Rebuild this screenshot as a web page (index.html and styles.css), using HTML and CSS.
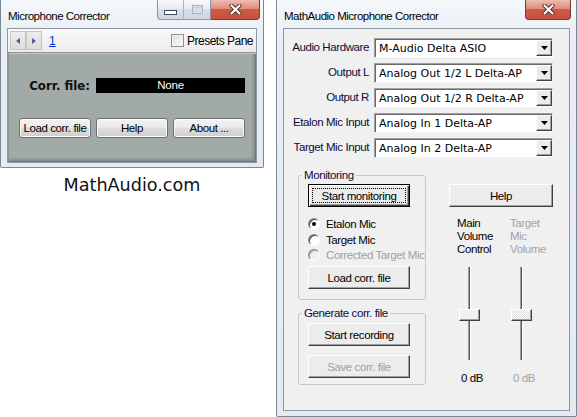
FILE: index.html
```html
<!DOCTYPE html>
<html>
<head>
<meta charset="utf-8">
<title>MathAudio Microphone Corrector</title>
<link rel="stylesheet" href="styles.css">
</head>
<body>
<div class="desk">
  <div class="leftcol">
    <div class="win win-small">
      <div class="titlebar">
        <span class="title">Microphone Corrector</span>
        <div class="tbtns">
          <div class="tb-group">
            <span class="tb tb-min"><svg width="13" height="5" viewBox="0 0 13 5"><rect x="0.5" y="0.5" width="12" height="4" fill="#fff" stroke="#3e4c5c"/></svg></span>
            <span class="tb tb-max"><svg width="11" height="9" viewBox="0 0 11 9"><rect x="0.5" y="0.5" width="10" height="8" fill="none" stroke="#aab3be"/><rect x="1.5" y="1.5" width="8" height="2" fill="#c3cbd4"/></svg></span>
          </div>
          <span class="tb tb-close"><svg width="13" height="11" viewBox="0 0 13 11"><path d="M2.5 1.5 L10.5 9.5 M10.5 1.5 L2.5 9.5" stroke="#5b2b24" stroke-width="4" stroke-linecap="round"/><path d="M2.5 1.5 L10.5 9.5 M10.5 1.5 L2.5 9.5" stroke="#fff" stroke-width="2.2" stroke-linecap="round"/></svg></span>
        </div>
      </div>
      <div class="client client-small">
        <div class="toolbar">
          <div class="nav">
            <span class="navbtn"><svg width="4" height="6" viewBox="0 0 4 6"><path d="M4 0 L0 3 L4 6 Z" fill="#4d5c94"/></svg></span>
            <span class="navbtn"><svg width="4" height="6" viewBox="0 0 4 6"><path d="M0 0 L4 3 L0 6 Z" fill="#4d5c94"/></svg></span>
          </div>
          <a class="pagelink">1</a>
          <span class="presets"><span class="chk"></span>Presets Pane</span>
        </div>
        <div class="panel">
          <div class="corr-row">
            <span class="corr-label">Corr. file:</span>
            <span class="corr-box">None</span>
          </div>
          <div class="btn-row">
            <button class="wbtn">Load corr. file</button>
            <button class="wbtn">Help</button>
            <button class="wbtn">About ...</button>
          </div>
        </div>
      </div>
    </div>
    <div class="site">MathAudio.com</div>
  </div>

  <div class="win win-main">
    <div class="titlebar">
      <span class="title">MathAudio Microphone Corrector</span>
      <div class="tbtns">
        <span class="tb tb-close tb-close-solo"><svg width="13" height="11" viewBox="0 0 13 11"><path d="M2.5 1.5 L10.5 9.5 M10.5 1.5 L2.5 9.5" stroke="#5b2b24" stroke-width="4" stroke-linecap="round"/><path d="M2.5 1.5 L10.5 9.5 M10.5 1.5 L2.5 9.5" stroke="#fff" stroke-width="2.2" stroke-linecap="round"/></svg></span>
      </div>
    </div>
    <div class="client client-main">
      <div class="hw">
        <span class="hw-label">Audio Hardware</span>
        <div class="combo"><span class="combo-text">M-Audio Delta ASIO</span><span class="combo-btn"><svg width="7" height="4" viewBox="0 0 7 4"><path d="M0 0 H7 L3.5 4 Z" fill="#000"/></svg></span></div>
        <span class="hw-label">Output L</span>
        <div class="combo"><span class="combo-text">Analog Out 1/2 L Delta-AP</span><span class="combo-btn"><svg width="7" height="4" viewBox="0 0 7 4"><path d="M0 0 H7 L3.5 4 Z" fill="#000"/></svg></span></div>
        <span class="hw-label">Output R</span>
        <div class="combo"><span class="combo-text">Analog Out 1/2 R Delta-AP</span><span class="combo-btn"><svg width="7" height="4" viewBox="0 0 7 4"><path d="M0 0 H7 L3.5 4 Z" fill="#000"/></svg></span></div>
        <span class="hw-label">Etalon Mic Input</span>
        <div class="combo"><span class="combo-text">Analog In 1 Delta-AP</span><span class="combo-btn"><svg width="7" height="4" viewBox="0 0 7 4"><path d="M0 0 H7 L3.5 4 Z" fill="#000"/></svg></span></div>
        <span class="hw-label">Target Mic Input</span>
        <div class="combo"><span class="combo-text">Analog In 2 Delta-AP</span><span class="combo-btn"><svg width="7" height="4" viewBox="0 0 7 4"><path d="M0 0 H7 L3.5 4 Z" fill="#000"/></svg></span></div>
      </div>

      <div class="lower">
        <div class="lcol">
          <fieldset class="group group-mon">
            <legend>Monitoring</legend>
            <button class="cbtn cbtn-default">Start monitoring</button>
            <div class="radios">
              <div class="radio"><span class="rdot checked"><span class="dot"></span></span>Etalon Mic</div>
              <div class="radio"><span class="rdot"></span>Target Mic</div>
              <div class="radio disabled"><span class="rdot"></span>Corrected Target Mic</div>
            </div>
            <button class="cbtn cbtn-load">Load corr. file</button>
          </fieldset>
          <fieldset class="group group-gen">
            <legend>Generate corr. file</legend>
            <button class="cbtn">Start recording</button>
            <button class="cbtn cbtn-save" disabled>Save corr. file</button>
          </fieldset>
        </div>
        <div class="rcol">
          <button class="cbtn cbtn-help">Help</button>
          <div class="vols">
            <div class="vol">
              <div class="vol-label">Main<br>Volume<br>Control</div>
              <div class="slider"><div class="thumb"></div></div>
              <div class="db">0 dB</div>
            </div>
            <div class="vol vol-off">
              <div class="vol-label">Target<br>Mic<br>Volume</div>
              <div class="slider"><div class="thumb"></div></div>
              <div class="db">0 dB</div>
            </div>
          </div>
        </div>
      </div>
    </div>
  </div>
</div>
</body>
</html>
```

FILE: styles.css
```css
* { box-sizing: border-box; }
html, body { margin: 0; padding: 0; }
body {
  background: #fff;
  width: 577px;
  height: 417px;
  overflow: hidden;
  font-family: "Liberation Sans", Arial, sans-serif;
  font-size: 11.5px;
  letter-spacing: -0.4px;
  color: #000;
}
button {
  font: inherit;
  letter-spacing: inherit;
  color: inherit;
  padding: 0;
  margin: 0;
}

.desk { display: flex; gap: 12px; align-items: flex-start; }
.leftcol { width: 264px; display: flex; flex-direction: column; align-items: center; }

/* window frame */
.win {
  border: 1px solid #7b8896;
  border-top: 0;
  border-radius: 0 0 2px 2px;
  background: linear-gradient(#f5f8fb, #e8eef4 40px, #e4eaf1);
  display: flex;
  flex-direction: column;
  flex: none;
}
.win-small { width: 264px; height: 168px; }
.win-main { width: 301px; height: 417px; }

.titlebar {
  height: 28px;
  flex: none;
  display: flex;
  justify-content: space-between;
  align-items: flex-start;
  padding: 0 3px 0 7px;
}
.win-main .titlebar { padding-right: 5px; }
.title { margin-top: 9px; line-height: 14px; letter-spacing: -0.5px; color: #000; }

.tbtns { display: flex; }
.tb-group {
  display: flex;
  height: 20px;
  border: 1px solid #8895a5;
  border-top: 0;
  border-radius: 0 0 0 4px;
  background: linear-gradient(#f8fafc, #e6ecf2 45%, #d6dfe9 50%, #ccd7e3);
  overflow: hidden;
}
.tb { display: flex; align-items: center; justify-content: center; }
.tb-min { width: 26px; border-right: 1px solid #a8b4c1; padding-top: 5px; }
.tb-max { width: 26px; padding-bottom: 1px; }
.tb-close {
  width: 49px;
  height: 20px;
  border: 1px solid #7d3a33;
  border-top: 0;
  border-left: 0;
  border-radius: 0 0 4px 0;
  background: linear-gradient(#eebcb1, #de8d7b 45%, #cd5c46 50%, #c84f3c);
}
.tb-close-solo { width: 46px; border-left: 1px solid #7d3a33; border-radius: 0 0 4px 4px; }

.client { margin: 0 6px; border: 1px solid #8c97a3; flex: none; }

/* small window */
.client-small { height: 135px; display: flex; flex-direction: column; }
.toolbar {
  height: 23px;
  flex: none;
  display: flex;
  align-items: center;
  padding: 0 3px 0 2px;
  background: linear-gradient(#f9f9f9, #ececec);
}
.nav { display: flex; }
.navbtn {
  width: 16px;
  height: 19px;
  border: 1px solid #c6c6c6;
  background: linear-gradient(#ececec, #dcdcdc);
  display: flex;
  align-items: center;
  justify-content: center;
}
.pagelink {
  margin-left: 7px;
  color: #0033cc;
  text-decoration: underline;
  font-size: 12px;
  letter-spacing: 0;
}
.presets { margin-left: auto; display: flex; align-items: center; gap: 3px; font-size: 12px; letter-spacing: -0.5px; }
.chk {
  width: 13px;
  height: 13px;
  border: 1px solid #8e8f8f;
  background: linear-gradient(135deg, #dcdcdc, #fbfbfb);
  box-shadow: inset 0 0 0 1px #f4f4f4;
}

.panel {
  flex: 1;
  background: #a2aaa8;
  padding: 26px 11px 0;
  box-shadow: inset 1px 1px 0 #8d9492, inset 0 2px 0 #c2c8c6, inset -1px -1px 0 #6f7674, inset -3px -3px 3px #858d8b;
}
.corr-row { display: flex; justify-content: flex-end; align-items: center; gap: 6px; height: 15px; }
.corr-label { font-family: "DejaVu Sans", Verdana, sans-serif; font-weight: bold; font-size: 11.8px; letter-spacing: 0; color: #111; }
.corr-box { width: 149px; height: 15px; background: #000; color: #fff; text-align: center; line-height: 15px; letter-spacing: -0.2px; }
.btn-row { display: flex; gap: 5px; margin-top: 25px; }
.wbtn {
  width: 72px;
  height: 20px;
  border: 1px solid #707070;
  border-radius: 3px;
  background: linear-gradient(#f3f3f3, #ebebeb 45%, #dddddd 50%, #cfcfcf);
  box-shadow: inset 0 0 0 1px #fbfbfb;
}

.site {
  margin-top: 7px;
  font-family: "DejaVu Sans", Verdana, sans-serif;
  font-size: 17.6px;
  line-height: 20px;
  letter-spacing: 0;
  color: #111;
}

/* main window */
.client-main { height: 383px; background: #f0f0f0; padding: 9px 0 0 8px; }
.hw {
  display: grid;
  grid-template-columns: 77px 179px;
  grid-auto-rows: 20px;
  column-gap: 5px;
  row-gap: 5px;
}
.hw-label { justify-self: end; align-self: center; padding-bottom: 3px; white-space: nowrap; color: #0c0c3a; }
.combo {
  display: flex;
  align-items: center;
  height: 20px;
  background: #fff;
  border: 1px solid;
  border-color: #a0a0a0 #f4f4f4 #f4f4f4 #a0a0a0;
  box-shadow: inset 1px 1px 0 #696969;
  padding: 0 0 0 4px;
  font-family: "DejaVu Sans", Verdana, sans-serif;
  font-size: 11px;
  letter-spacing: 0;
}
.combo-text { flex: 1; white-space: nowrap; overflow: hidden; }
.combo-btn {
  width: 16px;
  height: 16px;
  flex: none;
  background: #ececec;
  border: 1px solid;
  border-color: #fff #404040 #404040 #fff;
  box-shadow: inset -1px -1px 0 #a0a0a0;
  display: flex;
  align-items: center;
  justify-content: center;
  padding-bottom: 1px;
}

.lower { display: flex; gap: 23px; margin-top: 10px; padding-left: 6px; }
.lcol { width: 128px; display: flex; flex-direction: column; }
.group {
  margin: 0;
  min-width: 0;
  border: 1px solid #c2c8ce;
  border-radius: 3px;
  padding: 2px 15px 10px 9px;
}
.group legend { margin-left: -6px; padding: 0 2px; line-height: 14px; color: #0c0c3a; }
.group-gen { margin-top: 6px; padding-top: 3px; padding-bottom: 6px; }

.cbtn {
  display: block;
  width: 102px;
  height: 23px;
  background: #ececec;
  border: 1px solid;
  border-color: #fff #404040 #404040 #fff;
  box-shadow: inset -1px -1px 0 #a0a0a0;
}
.cbtn-default {
  border-color: #000;
  box-shadow: inset 1px 1px 0 #fff, inset -1px -1px 0 #404040, inset -2px -2px 0 #a0a0a0;
  outline: 1px dotted #000;
  outline-offset: -5px;
}
.cbtn-load { margin-top: 3px; }
.cbtn-save { margin-top: 9px; color: #a0a0a0; }
.cbtn-help { width: 104px; margin-top: 16px; }

.radios { margin-top: 9.5px; }
.radio { display: flex; align-items: center; gap: 6px; height: 15.5px; white-space: nowrap; }
.radio.disabled { color: #a0a0a0; }
.rdot {
  width: 12px;
  height: 12px;
  flex: none;
  border-radius: 50%;
  background: #fff;
  border: 1px solid;
  border-color: #8a8a8a #fff #fff #8a8a8a;
  box-shadow: inset 1px 1px 0 #404040;
  display: flex;
  align-items: center;
  justify-content: center;
}
.radio.disabled .rdot { background: #f0f0f0; box-shadow: inset 1px 1px 0 #a0a0a0; }
.dot { width: 4px; height: 4px; border-radius: 50%; background: #000; }

.rcol { width: 104px; display: flex; flex-direction: column; }
.vols { display: flex; margin-top: 10px; }
.vol { width: 52px; }
.vol-label { line-height: 13px; padding-left: 8px; height: 39px; white-space: nowrap; }
.vol-off .vol-label { padding-left: 9px; color: #a3a3a3; }
.slider {
  margin: 11px 0 0 10px;
  width: 21px;
  height: 93px;
  padding-top: 42px;
  background: linear-gradient(to right, transparent 9px, #9c9c9c 9px, #9c9c9c 10px, #5a5a5a 10px, #5a5a5a 11px, #fff 11px, #fff 12px, transparent 12px);
}
.thumb {
  height: 12px;
  background: #f0f0f0;
  border: 1px solid;
  border-color: #fff #404040 #404040 #fff;
  box-shadow: inset -1px -1px 0 #a0a0a0;
}
.vol-off .thumb {
  background: repeating-conic-gradient(#fff 0 25%, #dcdcdc 0 50%) 0 0 / 2px 2px;
}
.db { margin: 11px 0 0 12px; width: 21px; text-align: center; line-height: 14px; white-space: nowrap; }
.vol-off .db { color: #a3a3a3; }
```
